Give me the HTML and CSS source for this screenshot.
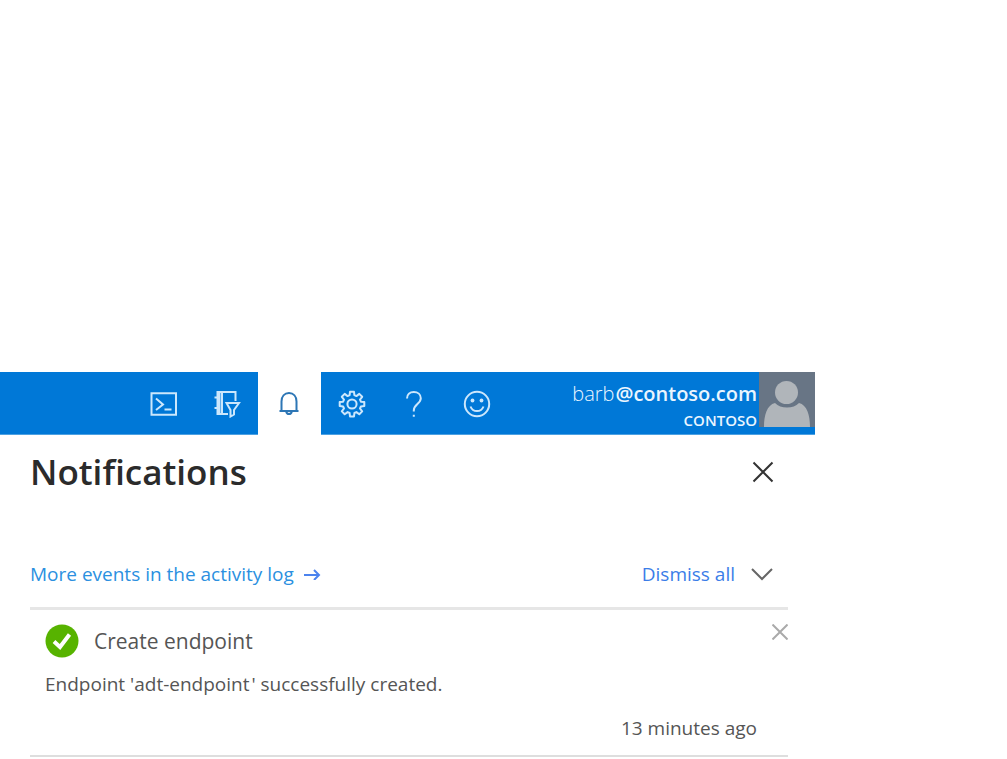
FILE: index.html
```html
<!DOCTYPE html>
<html lang="en">
<head>
<meta charset="utf-8">
<title>Notifications</title>
<link rel="stylesheet" href="styles.css">
</head>
<body>
<div class="portal">
  <header class="topbar">
    <nav class="tools" aria-label="Portal tools">
      <button class="tool" type="button" aria-label="Cloud Shell">
        <svg width="28" height="28" viewBox="0 0 28 28"><path d="M1.500 3.200h24.500v21.600h-24.500zM6 8.500l7 6-7 5.500M14.500 19.500h7"/></svg>
      </button>
      <button class="tool" type="button" aria-label="Directories and subscriptions">
        <svg width="28" height="28" viewBox="0 0 28 28"><path d="M22.500 11V2H4.500v22H15M9 2v22M6.500 2v22M1.500 7.500h5M1.500 18h5M13.500 13h12.500l-5 7v4.500l-3.500 2v-6.500z"/></svg>
      </button>
      <button class="tool tool-active" type="button" aria-label="Notifications">
        <svg width="28" height="28" viewBox="0 0 28 28"><path d="M4.500 21h19M6.500 21v-9.500C6.500 6.500 9.500 3 14 3s7.500 3.500 7.500 8.500V21M11.200 21.500c.4 1.900 1.400 2.600 2.800 2.600s2.400-.7 2.800-2.600"/></svg>
      </button>
      <button class="tool" type="button" aria-label="Settings">
        <svg width="28" height="28" viewBox="0 0 28 28"><circle cx="14" cy="14" r="4.600"/><path stroke-linejoin="round" d="M11.600 5.200 12 1.800h4l.4 3.400 2 .9 2.900-2.200 2.900 2.900-2.200 2.800.9 2.100 3.400.4v4l-3.400.4-.9 2 2.200 2.900-2.900 2.900-2.900-2.200-2 .9-.4 3.400h-4l-.4-3.400-2-.9-2.900 2.200-2.900-2.900L6 18.500l-.9-2-3.400-.4v-4l3.400-.4.9-2.100-2.200-2.800 2.900-2.900 2.900 2.200z"/></svg>
      </button>
      <button class="tool" type="button" aria-label="Help">
        <svg width="28" height="28" viewBox="0 0 28 28"><path d="M7 8.500C7 4.500 9.800 2 13.800 2s7 2.500 7 6.300c0 5.500-7 6.200-7 12.200v1M13.800 24.800v2"/></svg>
      </button>
      <button class="tool" type="button" aria-label="Feedback">
        <svg width="28" height="28" viewBox="0 0 28 28"><circle cx="14" cy="14" r="12.200"/><path d="M7.500 16.500c1.200 3 3.500 4.600 6.500 4.600s5.300-1.600 6.500-4.600"/><g class="solid"><circle cx="9.500" cy="10.500" r="1.900"/><circle cx="18.500" cy="10.500" r="1.900"/></g></svg>
      </button>
    </nav>
    <div class="account">
      <div class="identity">
        <div class="email"><span class="user">barb</span>@contoso.com</div>
        <div class="tenant">CONTOSO</div>
      </div>
      <svg class="avatar" width="56" height="55" viewBox="0 0 56 55" role="img" aria-label="Account picture"><path fill="#687585" d="M0 0h56v55H0z"/><path fill="#b0b5ba" d="M5 55c0-12 3-22 11-24 3 3 7 4.500 12 4.500S37 34 40 31c8 2 11 12 11 24z"/><circle cx="27.500" cy="20.500" r="13" fill="#687585"/><circle cx="27.500" cy="20.500" r="11.500" fill="#b0b5ba"/></svg>
    </div>
  </header>
  <main class="panel">
    <div class="title-row">
      <h1>Notifications</h1>
      <button class="icon-button close" type="button" aria-label="Close">
        <svg width="22" height="22" viewBox="0 0 22 22"><path d="M1.500 1.500l19 19M20.500 1.500l-19 19"/></svg>
      </button>
    </div>
    <div class="actions">
      <a class="log-link" href="#activity-log">More events in the activity log<svg width="18" height="12" viewBox="0 0 18 12"><path d="M1 7h15M11 2l5 5-5 5"/></svg></a>
      <button class="dismiss" type="button">Dismiss all<svg width="24" height="16" viewBox="0 0 24 16"><path d="M2 3l10 10 10-10"/></svg></button>
    </div>
    <article class="notice">
      <div class="notice-head">
        <svg width="34" height="34" viewBox="0 0 34 34" aria-hidden="true"><circle cx="17" cy="17" r="16.500" fill="#57b300"/><path d="M9 17.500l6 5.500 9.500-12.500" fill="none" stroke="#fff" stroke-width="4"/></svg>
        <h2>Create endpoint</h2>
        <button class="icon-button remove" type="button" aria-label="Dismiss notification">
          <svg width="16" height="16" viewBox="0 0 16 16"><path d="M.5.5l15 15M15.500.5l-15 15"/></svg>
        </button>
      </div>
      <p>Endpoint 'adt-endpoint&#8202;' successfully created.</p>
      <time>13 minutes ago</time>
    </article>
  </main>
</div>
</body>
</html>
```
FILE: styles.css
```css
* {
  box-sizing: border-box;
}

body {
  margin: 0;
  background: #fff;
  color: #555;
  font: 19px/28px "Open Sans", "Noto Sans", sans-serif;
}

h1, h2, p {
  margin: 0;
}

button {
  padding: 0;
  border: 0;
  background: none;
  color: inherit;
  font: inherit;
}

svg {
  display: block;
  flex: none;
}

.portal {
  padding: 372px 192px 0 0;
}

.topbar {
  display: flex;
  justify-content: space-between;
  height: 63px;
  padding-left: 133px;
  border-bottom: 1px solid #4da1e2;
  background: #0078d7;
  color: #eaf5ff;
}

.tools {
  display: flex;
  flex: 0 1 375px;
}

.tool {
  display: flex;
  flex: 1;
  align-items: center;
  justify-content: center;
  height: 63px;
  fill: none;
  stroke: #cce7fc;
  stroke-width: 2;
}

.tool-active {
  background: #fff;
  stroke: #2d76b5;
}

.solid {
  fill: #cce7fc;
  stroke: none;
}

.account {
  display: flex;
  gap: 2px;
}

.identity {
  padding-top: 8px;
  text-align: right;
  white-space: nowrap;
}

.email {
  font-size: 20px;
  font-weight: 600;
}

.user {
  font-weight: 300;
  padding-right: 1px;
}

.tenant {
  font-size: 15px;
  font-weight: 600;
  line-height: 24px;
}

.panel {
  padding: 13px 27px 0 30px;
}

.title-row {
  display: flex;
  align-items: center;
  justify-content: space-between;
  height: 48px;
  padding-right: 14px;
}

h1 {
  color: #2b2b2b;
  font-size: 35px;
  font-weight: 600;
  line-height: 48px;
}

.icon-button svg,
.log-link svg,
.dismiss svg {
  fill: none;
  stroke: currentColor;
  stroke-width: 2;
}

.close {
  color: #333;
}

.actions {
  display: flex;
  justify-content: space-between;
  padding: 64px 14px 19px 0;
}

.log-link,
.dismiss {
  display: flex;
  align-items: center;
}

.log-link {
  gap: 9px;
  color: #2b90df;
  text-decoration: none;
}

.log-link svg {
  color: #4b83ee;
}

.dismiss {
  gap: 15px;
  color: #3b7de8;
}

.dismiss svg {
  color: #666;
}

.notice {
  padding: 14px 0 13px 15px;
  border-top: 3px solid #e6e6e6;
  border-bottom: 2px solid #dedede;
}

.notice-head {
  display: flex;
  align-items: center;
  gap: 15px;
}

h2 {
  flex: 1;
  font-size: 21px;
  font-weight: 400;
}

.remove {
  align-self: flex-start;
  color: #aaa;
}

.notice p {
  margin-top: 12px;
}

time {
  display: block;
  margin-top: 16px;
  padding-right: 31px;
  text-align: right;
}
```
